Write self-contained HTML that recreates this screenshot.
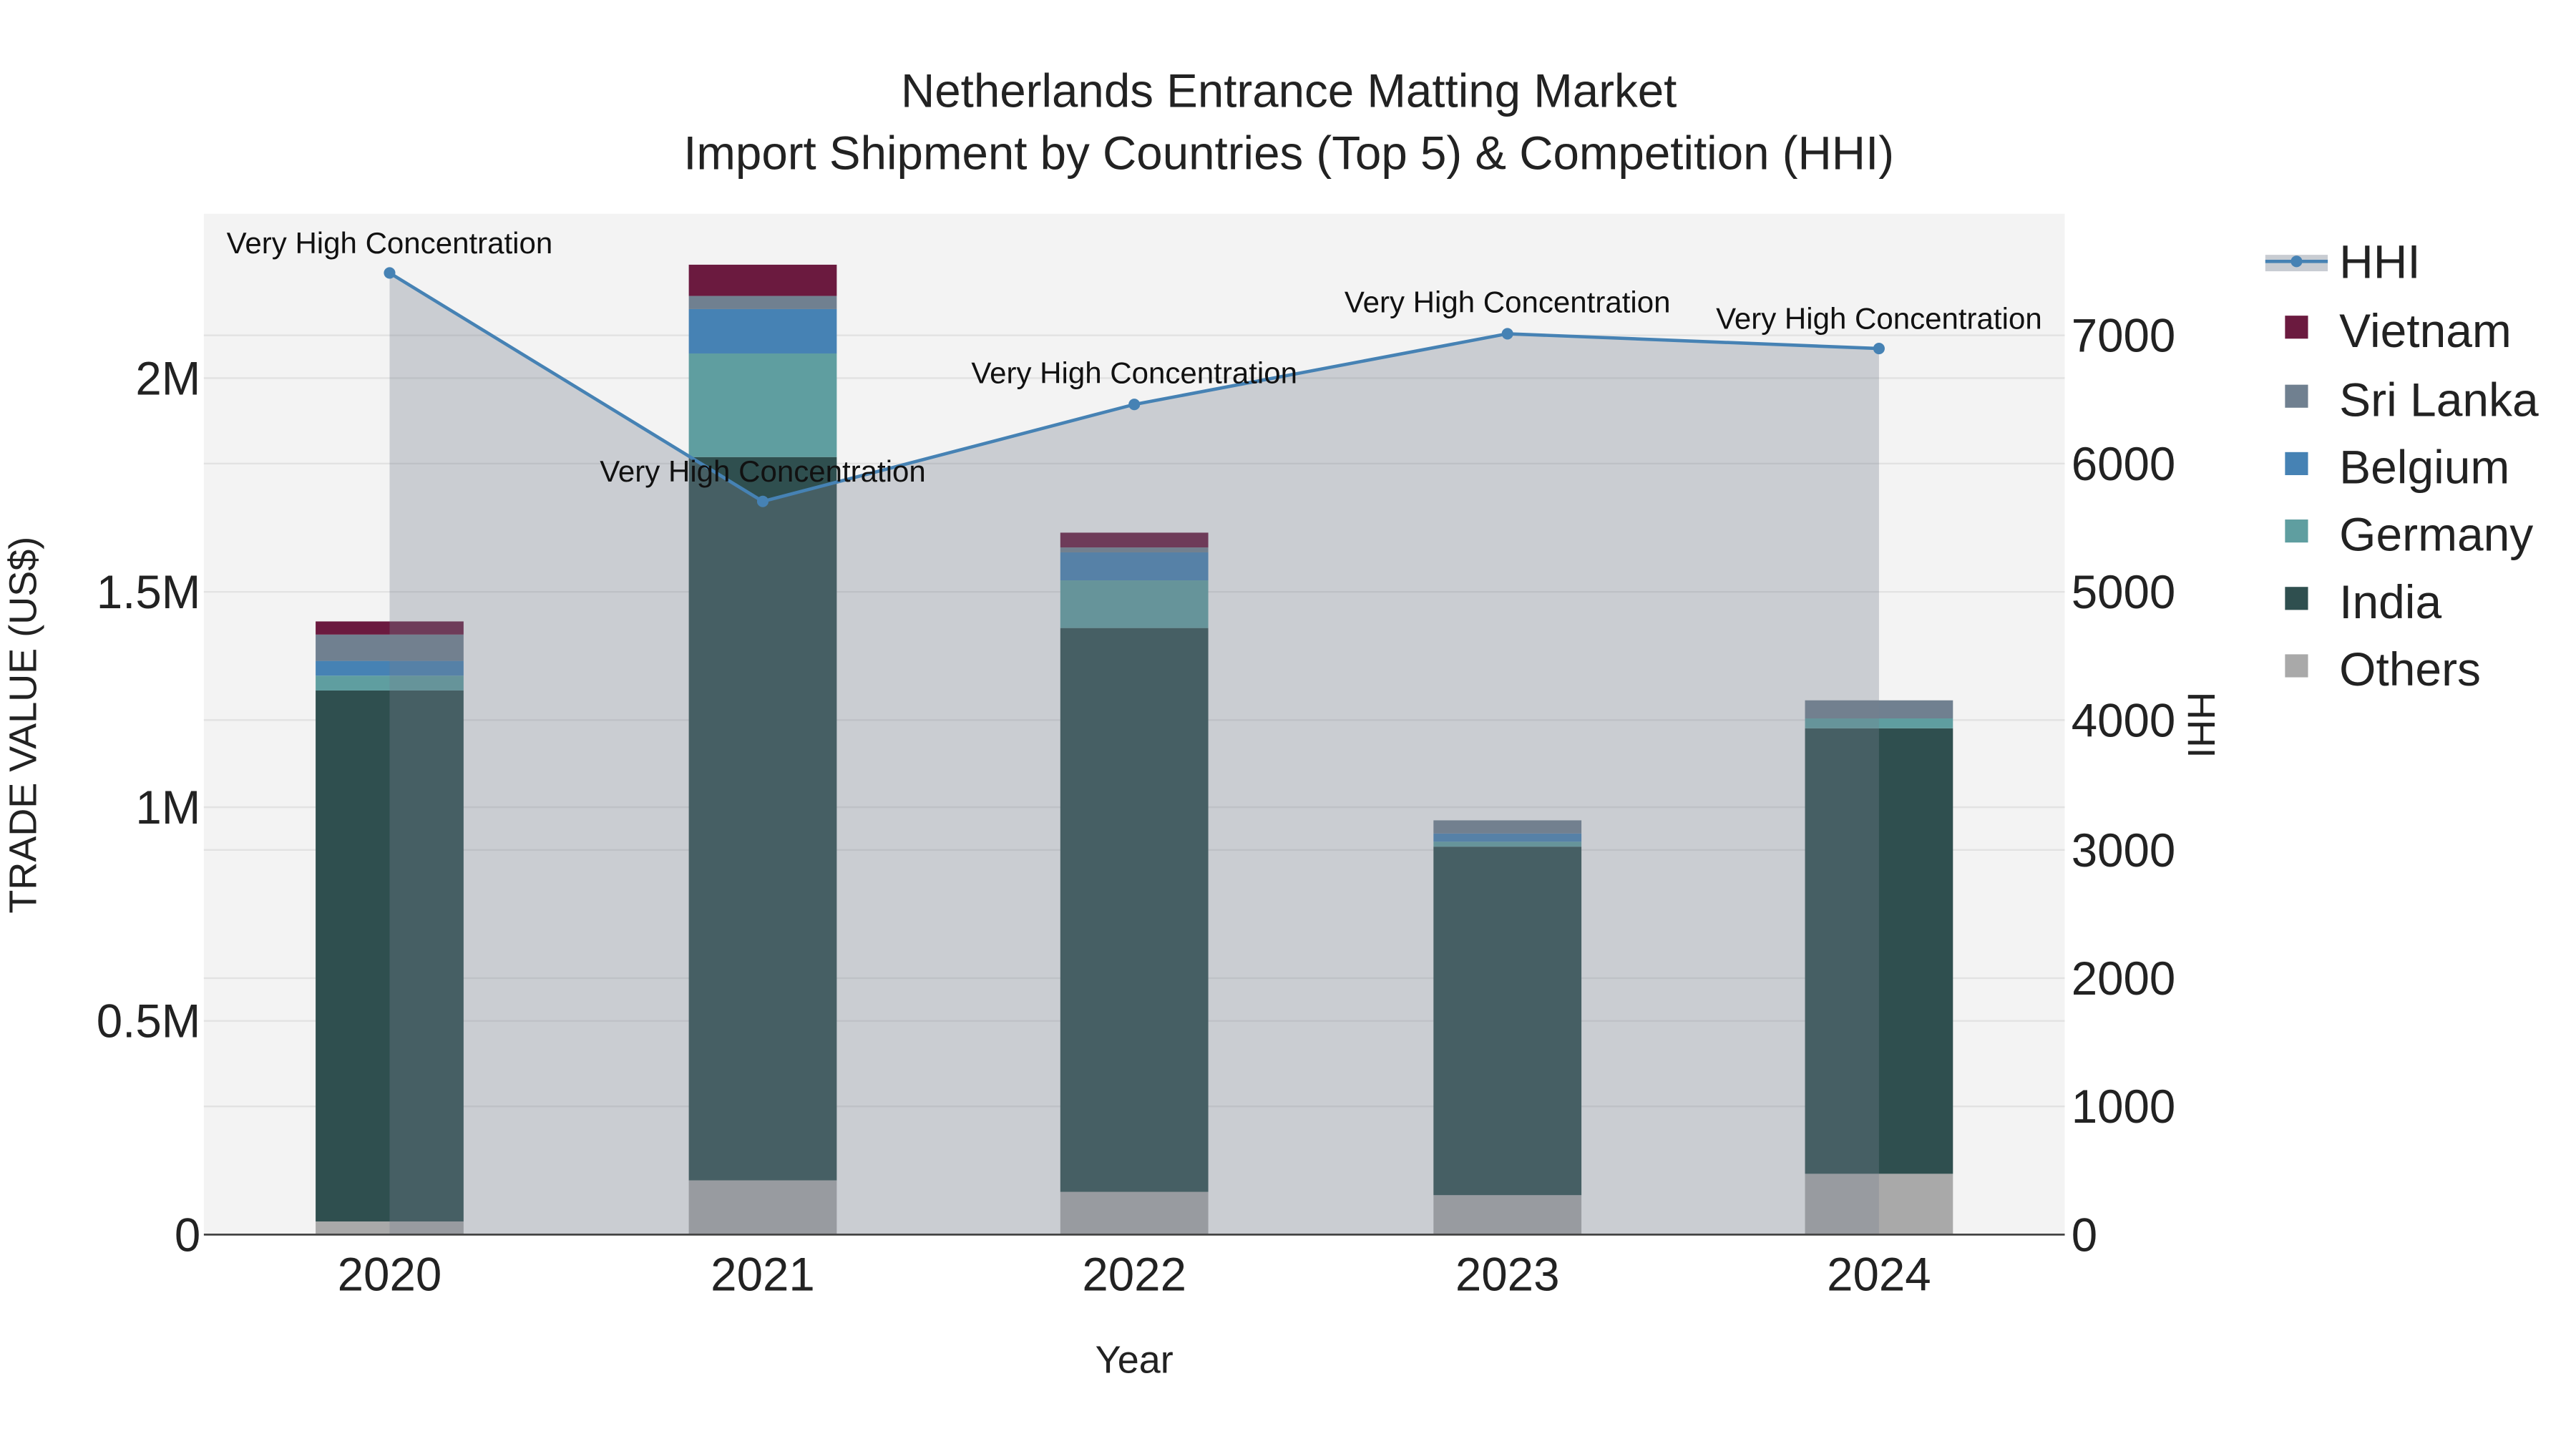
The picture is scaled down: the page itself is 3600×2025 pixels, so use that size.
<!DOCTYPE html>
<html><head><meta charset="utf-8"><style>html,body{margin:0;padding:0;background:#fff}svg{display:block}</style></head>
<body>
<svg width="3600" height="2025" viewBox="0 0 1567 881.4" xmlns="http://www.w3.org/2000/svg" font-family="Liberation Sans, sans-serif">
<rect width="1570" height="885" fill="#fff"/>
<rect x="124" y="130" width="1132" height="621" fill="#f3f3f3"/>
<g stroke="#e2e2e2" stroke-width="1">
<line x1="124" x2="1256" y1="621" y2="621"/><line x1="124" x2="1256" y1="491" y2="491"/><line x1="124" x2="1256" y1="360" y2="360"/><line x1="124" x2="1256" y1="230" y2="230"/>
<line x1="124" x2="1256" y1="673" y2="673"/><line x1="124" x2="1256" y1="595" y2="595"/><line x1="124" x2="1256" y1="517" y2="517"/><line x1="124" x2="1256" y1="438" y2="438"/><line x1="124" x2="1256" y1="282" y2="282"/><line x1="124" x2="1256" y1="204" y2="204"/>
</g>
<g>
<rect x="192" y="743" width="90" height="8" fill="#a9a9a9"/><rect x="192" y="420" width="90" height="323" fill="#2f4f4f"/><rect x="192" y="411" width="90" height="9" fill="#5f9ea0"/><rect x="192" y="402" width="90" height="9" fill="#4682b4"/><rect x="192" y="386" width="90" height="16" fill="#708090"/><rect x="192" y="378" width="90" height="8" fill="#6b1a3f"/>
<rect x="419" y="718" width="90" height="33" fill="#a9a9a9"/><rect x="419" y="278" width="90" height="440" fill="#2f4f4f"/><rect x="419" y="215" width="90" height="63" fill="#5f9ea0"/><rect x="419" y="188" width="90" height="27" fill="#4682b4"/><rect x="419" y="180" width="90" height="8" fill="#708090"/><rect x="419" y="161" width="90" height="19" fill="#6b1a3f"/>
<rect x="645" y="725" width="90" height="26" fill="#a9a9a9"/><rect x="645" y="382" width="90" height="343" fill="#2f4f4f"/><rect x="645" y="353" width="90" height="29" fill="#5f9ea0"/><rect x="645" y="336" width="90" height="17" fill="#4682b4"/><rect x="645" y="333" width="90" height="3" fill="#708090"/><rect x="645" y="324" width="90" height="9" fill="#6b1a3f"/>
<rect x="872" y="727" width="90" height="24" fill="#a9a9a9"/><rect x="872" y="515" width="90" height="212" fill="#2f4f4f"/><rect x="872" y="512" width="90" height="3" fill="#5f9ea0"/><rect x="872" y="507" width="90" height="5" fill="#4682b4"/><rect x="872" y="499" width="90" height="8" fill="#708090"/>
<rect x="1098" y="714" width="90" height="37" fill="#a9a9a9"/><rect x="1098" y="443" width="90" height="271" fill="#2f4f4f"/><rect x="1098" y="437" width="90" height="6" fill="#5f9ea0"/><rect x="1098" y="426" width="90" height="11" fill="#708090"/>
</g>
<polygon points="237,751 237,166 464,305 690,246 917,203 1143,212 1143,751" fill="rgba(118,128,143,0.33)"/>
<line x1="124" x2="1256" y1="751" y2="751" stroke="#444" stroke-width="1.2"/>
<polyline points="237,166 464,305 690,246 917,203 1143,212" fill="none" stroke="#4682b4" stroke-width="2"/>
<g fill="#4682b4"><circle cx="237" cy="166" r="3.5"/><circle cx="464" cy="305" r="3.5"/><circle cx="690" cy="246" r="3.5"/><circle cx="917" cy="203" r="3.5"/><circle cx="1143" cy="212" r="3.5"/></g>
<g font-size="18.3" text-anchor="middle" fill="#111">
<text x="237" y="154">Very High Concentration</text><text x="464" y="293">Very High Concentration</text><text x="690" y="233">Very High Concentration</text><text x="917" y="190">Very High Concentration</text><text x="1143" y="200">Very High Concentration</text>
</g>
<g font-size="28.5" text-anchor="middle" fill="#222">
<text x="784" y="65">Netherlands Entrance Matting Market</text>
<text x="784" y="103">Import Shipment by Countries (Top 5) &amp; Competition (HHI)</text>
</g>
<g font-size="28.5" text-anchor="end" fill="#222">
<text x="122" y="761">0</text><text x="122" y="631">0.5M</text><text x="122" y="501">1M</text><text x="122" y="370">1.5M</text><text x="122" y="240">2M</text>
</g>
<g font-size="28.5" text-anchor="start" fill="#222">
<text x="1260" y="761">0</text><text x="1260" y="683">1000</text><text x="1260" y="605">2000</text><text x="1260" y="527">3000</text><text x="1260" y="448">4000</text><text x="1260" y="370">5000</text><text x="1260" y="292">6000</text><text x="1260" y="214">7000</text>
</g>
<g font-size="28.5" text-anchor="middle" fill="#222">
<text x="237" y="785">2020</text><text x="464" y="785">2021</text><text x="690" y="785">2022</text><text x="917" y="785">2023</text><text x="1143" y="785">2024</text>
</g>
<text x="690" y="835" font-size="23.5" text-anchor="middle" fill="#222">Year</text>
<text transform="translate(22,441) rotate(-90)" font-size="23.5" text-anchor="middle" fill="#222">TRADE VALUE (US$)</text>
<text transform="translate(1331,441) rotate(90)" font-size="23.5" text-anchor="middle" fill="#222">HHI</text>
<g>
<rect x="1378" y="155" width="38" height="10" fill="rgba(118,128,143,0.4)"/>
<line x1="1378" x2="1416" y1="159" y2="159" stroke="#4682b4" stroke-width="2"/><circle cx="1397" cy="159" r="3.5" fill="#4682b4"/>
<rect x="1390" y="192" width="14" height="14" fill="#6b1a3f"/>
<rect x="1390" y="234" width="14" height="14" fill="#708090"/>
<rect x="1390" y="275" width="14" height="14" fill="#4682b4"/>
<rect x="1390" y="316" width="14" height="14" fill="#5f9ea0"/>
<rect x="1390" y="357" width="14" height="14" fill="#2f4f4f"/>
<rect x="1390" y="398" width="14" height="14" fill="#a9a9a9"/>
</g>
<g font-size="28.7" fill="#222">
<text x="1423" y="169">HHI</text><text x="1423" y="211">Vietnam</text><text x="1423" y="253">Sri Lanka</text><text x="1423" y="294">Belgium</text><text x="1423" y="335">Germany</text><text x="1423" y="376">India</text><text x="1423" y="417">Others</text>
</g>
</svg>
</body></html>
